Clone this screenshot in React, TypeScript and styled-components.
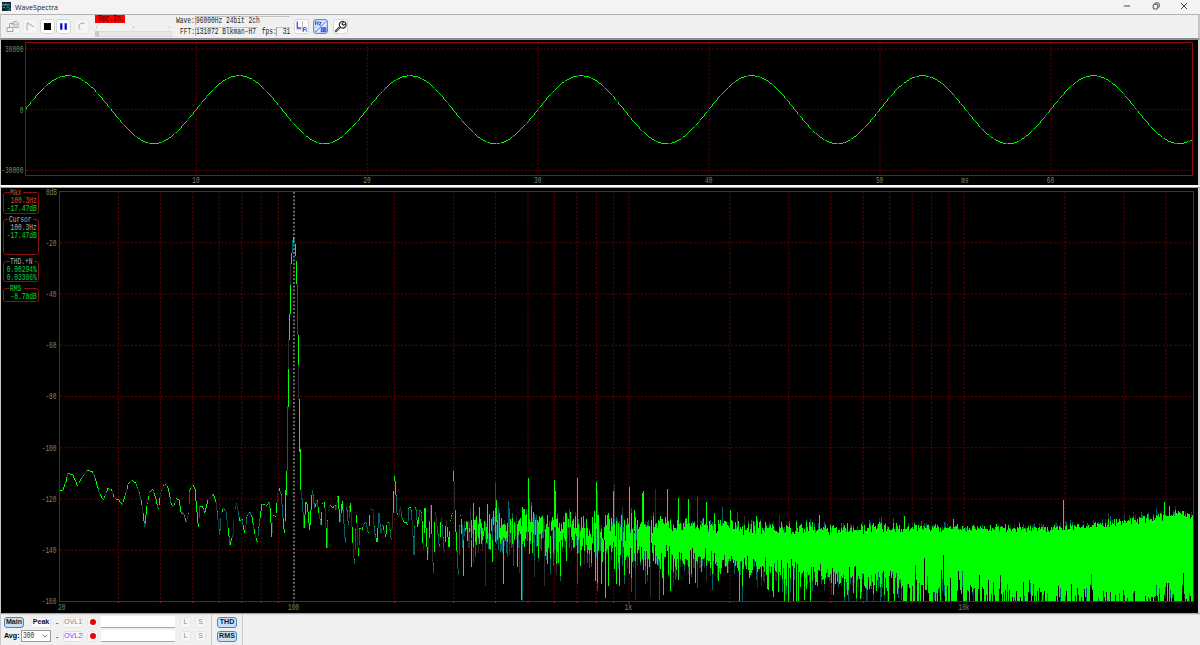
import React from 'react';
import styled, { createGlobalStyle, css } from 'styled-components';

const GlobalStyle = createGlobalStyle`
  html, body { margin: 0; padding: 0; background: #f0f0f0; overflow: hidden; }
  * { box-sizing: border-box; }
`;

const Window = styled.div`
  width: 1200px;
  height: 645px;
  display: flex;
  flex-direction: column;
  background: #f0f0f0;
  font-family: 'Liberation Sans', sans-serif;
  overflow: hidden;
`;

const TitleBar = styled.header`
  height: 14px;
  flex: none;
  display: flex;
  align-items: center;
  padding: 0 11px 1px 2px;
  background: #f3f3f3;
  color: #222;
`;

const Title = styled.span`
  font: 7.1px/13px 'Open Sans', 'Noto Sans', sans-serif;
  margin-left: 4px;
  padding-top: 1px;
  flex: 1;
`;

const WindowControls = styled.div`
  display: flex;
  gap: 18.5px;
  svg { display: block; margin-top: -1px; }
`;

const Toolbar = styled.div`
  height: 26px;
  flex: none;
  display: flex;
  align-items: flex-start;
  border: 1px solid #b4b4b4;
  border-left-color: #c8c8c8;
  border-right: 2px solid #c4c4c4;
  border-bottom: 2px solid #8c8c8c;
  background: #f0f0f0;
  padding-left: 4px;
`;

const ToolButton = styled.button<{ $gap?: number; $active?: boolean; $muted?: boolean }>`
  width: 15px;
  height: 15px;
  flex: none;
  display: flex;
  align-items: center;
  justify-content: center;
  margin: 4px 0 0 ${p => p.$gap ?? 0}px;
  padding: 0;
  border: 1px solid ${p => (p.$active ? '#5b93c4' : p.$muted ? '#eaeaea' : '#d6d6d6')};
  border-radius: 3px;
  background: ${p => (p.$active ? '#c3dcf3' : p.$muted ? '#f5f5f5' : '#fefefe')};
`;

const RecordStatus = styled.div`
  width: 77px;
  flex: none;
  margin-left: 6px;
`;

const RecordBadge = styled.div`
  width: 30px;
  height: 8px;
  padding-left: 3px;
  background: #ff0000;
  color: #300;
  line-height: 9px;
`;

const SliderTicks = styled.div`
  display: flex;
  justify-content: space-between;
  margin: 3px 2px 3px 1px;
  i { width: 1px; height: 2px; background: #c8c8c8; }
`;

const SliderTrack = styled.div`
  height: 6px;
  border: 1px solid #dcdcdc;
  background: #e7e7e7;
`;

const SliderThumb = styled.div`
  width: 4px;
  height: 6px;
  margin: -1px;
  background: #c9c9c9;
`;

const Mono = styled.span<{ $right?: boolean }>`
  display: block;
  flex: none;
  font-family: 'Liberation Mono', monospace;
  font-size: 8.5px;
  line-height: inherit;
  white-space: pre;
  transform: scaleX(0.735);
  transform-origin: ${p => (p.$right ? 'right' : 'left')} center;
`;

const FormatInfo = styled.div`
  width: 115px;
  flex: none;
  margin-left: 4px;
  color: #1c1c1c;
`;

const InfoRow = styled.div<{ $indent?: number }>`
  display: flex;
  height: 10px;
  margin-top: 1px;
  padding-left: ${p => p.$indent ?? 0}px;
  line-height: 9px;
`;

const InfoLabel = styled.div<{ $w: number }>`
  width: ${p => p.$w}px;
  flex: none;
  padding-top: 1px;
`;

const InfoField = styled.div<{ $w: number; $end?: boolean }>`
  width: ${p => p.$w}px;
  height: 9px;
  flex: none;
  display: flex;
  justify-content: ${p => (p.$end ? 'flex-end' : 'flex-start')};
  border-left: 1px solid #a8a8a8;
  border-top: 1px solid #c2c2c2;
  line-height: 9px;
`;

const GraphPane = styled.main<{ $h: number }>`
  height: ${p => p.$h}px;
  flex: none;
  display: flex;
  background: #000;
  border-left: 1px solid #c8c8c8;
  border-right: 2px solid #d6d6d6;
`;

const Splitter = styled.div`
  height: 3px;
  flex: none;
  background: #fafafa;
  border-bottom: 1px solid #a0a0a0;
`;

const Readouts = styled.aside`
  width: 40px;
  flex: none;
  padding: 4px 2px 0 2px;
  display: flex;
  flex-direction: column;
`;

const Group = styled.section<{ $h: number; $gap: number }>`
  height: ${p => p.$h}px;
  flex: none;
  margin-bottom: ${p => p.$gap}px;
  border: 1px solid #8a1212;
  border-radius: 3px;
`;

const Legend = styled.div<{ $color: string; $indent: number; $w: number }>`
  width: ${p => p.$w}px;
  height: 7px;
  margin: -3px 0 0 ${p => p.$indent}px;
  background: #000;
  color: ${p => p.$color};
  line-height: 7px;
`;

const Reading = styled.div<{ $color: string }>`
  display: flex;
  justify-content: flex-end;
  height: 7.7px;
  line-height: 8px;
  margin-right: 1px;
  color: ${p => p.$color};
`;

const BottomBar = styled.footer`
  flex: 1;
  display: flex;
  border-top: 1px solid #a8a8a8;
  background: #f0f0f0;
`;

const Panel = styled.div<{ $w: number }>`
  width: ${p => p.$w}px;
  flex: none;
  display: flex;
  flex-direction: column;
  gap: 2px;
  padding: 1px 0 0 3px;
  border-left: 1px solid #c8c8c8;
  border-top: 1px solid #dcdcdc;
`;

const PanelRow = styled.div`
  display: flex;
  align-items: center;
  height: 12px;
`;

type Tone = 'on' | 'plain' | 'gray' | 'rose' | 'blue';
const tones: Record<Tone, ReturnType<typeof css>> = {
  on: css`background: #c8e0f5; border-color: #4b86b8; color: #0c1c2c; font-weight: bold;`,
  plain: css`background: #fbfbfb; border-color: #e6e6e6; color: #111; font-weight: bold;`,
  gray: css`background: #f7f7f7; border-color: #e6e6e6; color: #8b8b8b;`,
  rose: css`background: #f7f7f7; border-color: #e6e6e6; color: #b07f7f;`,
  blue: css`background: #fbfbfb; border-color: #dedede; color: #5656f0;`,
};

const SmallButton = styled.button<{ $w: number; $tone: Tone; $gap?: number }>`
  width: ${p => p.$w}px;
  height: 11px;
  flex: none;
  display: flex;
  align-items: center;
  justify-content: center;
  margin-left: ${p => p.$gap ?? 0}px;
  padding: 0;
  border: 1px solid;
  border-radius: 3px;
  font: 7.1px/9px 'Liberation Sans', sans-serif;
  ${p => tones[p.$tone]}
`;

const Dash = styled.span`
  width: 12px;
  flex: none;
  text-align: center;
  font: 8px/9px 'Liberation Sans', sans-serif;
`;

const RedDot = styled.i`
  width: 6px;
  height: 6px;
  flex: none;
  border-radius: 50%;
  background: #f40000;
`;

const NameField = styled.div`
  width: 74px;
  height: 12px;
  flex: none;
  margin-left: 3px;
  background: #fff;
  border-bottom: 1px solid #a8a8a8;
`;

const AvgLabel = styled.span`
  width: 17px;
  flex: none;
  font: bold 7.1px/9px 'Liberation Sans', sans-serif;
`;

const Select = styled.div`
  width: 30px;
  height: 12px;
  flex: none;
  display: flex;
  align-items: center;
  justify-content: space-between;
  padding: 0 2px 0 1px;
  border: 1px solid #9a9a9a;
  background: #fff;
  line-height: 9px;
  color: #333;
`;

const SelectValue = styled.div`
  width: 12px;
  padding-top: 1px;
`;

const PANE_X = 1;
const WAVE_Y = 40;

function AxisText({ x, y, children, anchor = 'end' }: { x: number; y: number; children: string; anchor?: 'end' | 'start' | 'middle' }) {
  return (
    <text
      x={x}
      y={y}
      textAnchor={anchor}
      textLength={children.length * 3.7}
      lengthAdjust="spacingAndGlyphs"
      fontFamily="'Liberation Mono', monospace"
      fontSize="8.5"
      fill="#7d8460"
    >
      {children}
    </text>
  );
}

type Pt = [number, number];

/** Linear interpolation through a table of points sorted by x. */
function sample(table: Pt[], x: number): number {
  if (x <= table[0][0]) return table[0][1];
  for (let i = 1; i < table.length; i++) {
    if (x <= table[i][0]) {
      const [x0, y0] = table[i - 1];
      const [x1, y1] = table[i];
      return y0 + ((y1 - y0) * (x - x0)) / (x1 - x0);
    }
  }
  return table[table.length - 1][1];
}

function createRandom(seed: number) {
  let s = seed;
  return () => {
    s = (s + 0x6d2b79f5) | 0;
    let t = Math.imul(s ^ (s >>> 15), 1 | s);
    t = (t + Math.imul(t ^ (t >>> 7), 61 | t)) ^ t;
    return ((t ^ (t >>> 14)) >>> 0) / 4294967296;
  };
}

interface Strokes { g: string; t: string; d: string }
const add = (s: Strokes, k: keyof Strokes, x: number, a: number, b: number) => {
  s[k] += `M${x + 0.5} ${Math.round(a)}V${Math.max(Math.round(b), Math.round(a) + 1)}`;
};

function buildWave(): Strokes {
  const s: Strokes = { g: '', t: '', d: '' };
  const f = (x: number) => 109.3 - 34 * Math.sin(((x - 25.5) / 170.9) * 2 * Math.PI);
  for (let x = 26; x < 1192; x++) {
    const a = f(x);
    const b = f(x + 1);
    const k = x % 13 === 5 || x % 13 === 6 || x % 29 === 3 ? 't' : 'g';
    add(s, k, x, Math.min(a, b), Math.max(a, b));
  }
  return s;
}

const low: Pt[] = ([
  [28, 118], [38, 122], [48, 95], [54, 69], [68, 74], [82, 106], [95, 84], [112, 61], [126, 62], [136, 85],
  [148, 130], [160, 150], [174, 115], [184, 118], [194, 145], [206, 149], [216, 164], [228, 128], [236, 98],
  [246, 90], [256, 98], [268, 128], [276, 165], [284, 230], [292, 160], [300, 124], [308, 118], [316, 140],
  [325, 177], [334, 120], [341, 106], [348, 102], [356, 120], [364, 163], [372, 166], [380, 145], [387, 150],
  [394, 192], [400, 187], [409, 217], [415, 190], [420, 120], [428, 103], [435, 118], [445, 230], [450, 168],
  [457, 168], [464, 190], [474, 150], [490, 132], [498, 155], [509, 255], [514, 190], [520, 174], [528, 185],
  [540, 284], [549, 255], [554, 180], [560, 160], [569, 212], [576, 208], [584, 250], [592, 195], [599, 185],
  [606, 200], [614, 250], [622, 276], [630, 205], [636, 163], [645, 162], [650, 168], [657, 155], [661, 180],
  [665, 260], [671, 195], [677, 200], [685, 120],
] as Pt[]).map(([x, y]) => [50 + x / 3, 450 + y / 3] as Pt);

const mid: Pt[] = ([
  [27, 925], [34, 945], [37, 990], [43, 1060], [47, 935], [50, 870], [53, 680], [56, 480], [59, 400], [62, 270],
  [65, 200], [68, 180], [71, 172], [76, 190], [79, 240], [82, 310], [85, 465], [88, 640], [91, 810], [94, 930],
  [98, 980], [102, 1043], [108, 965], [112, 975], [119, 1050], [127, 930], [134, 985], [141, 960], [147, 1000],
  [153, 1035], [158, 970], [164, 965], [171, 1105], [175, 990], [181, 975], [188, 985], [195, 975], [198, 990],
  [204, 948], [210, 1025], [217, 962], [226, 1088], [230, 980], [235, 1035], [241, 968], [246, 1040], [253, 1153],
  [260, 1005], [265, 1128], [270, 1045], [276, 1050], [283, 1030], [288, 1025], [295, 1060], [302, 985],
  [309, 990], [313, 1055], [321, 1085], [327, 1000], [333, 1060], [338, 1035], [347, 1070], [352, 1025],
  [357, 1030], [364, 1080], [369, 1000], [374, 888], [378, 945], [381, 1000], [386, 1010], [391, 980],
  [396, 1015], [402, 1025], [407, 1025], [413, 1035], [417, 985], [422, 980], [427, 1030], [432, 1125],
  [437, 980], [443, 1040], [450, 990], [455, 1000], [460, 1110], [465, 985], [473, 1140], [483, 975],
  [490, 1178], [496, 995], [502, 1045], [508, 1100], [514, 1010], [523, 1120], [529, 1020], [537, 1100],
  [542, 1020], [547, 1000], [551, 873], [556, 1020], [565, 1185], [571, 1005],
] as Pt[]).map(([x, y]) => [270 + x / 3, 180 + y / 3] as Pt);

/** The steep skirts of the fundamental, one span per pixel column. */
const skirts: [number, number, number, keyof Strokes][] = [
  [285, 490, 521, 'g'], [286, 471, 495, 'g'], [287, 406, 471, 't'], [288, 369, 407, 'g'], [288, 339, 370, 'd'],
  [289, 314, 340, 'g'], [290, 285, 314, 'g'], [290, 263, 286, 'd'], [291, 253, 264, 'g'], [292, 240, 253, 't'],
  [293, 237, 243, 'g'], [294, 239, 247, 't'], [295, 244, 256, 'g'], [296, 261, 284, 'g'], [297, 283, 335, 't'],
  [298, 335, 365, 'g'], [298, 365, 400, 'd'], [299, 399, 452, 'g'], [300, 449, 490, 'g'], [301, 490, 500, 'd'],
];

const ceiling: Pt[] = [
  [460, 514], [500, 513], [560, 518], [620, 521], [700, 524], [800, 528], [900, 527], [1000, 528],
  [1060, 528], [1100, 524], [1130, 520], [1160, 516], [1185, 512], [1193, 518],
];
const floor: Pt[] = [
  [460, 546], [520, 549], [560, 552], [600, 556], [660, 561], [700, 566], [760, 573], [800, 578],
  [850, 583], [900, 586], [950, 589], [1000, 592], [1193, 594],
];

type Spike = [number, number, keyof Strokes];
const peaks: Spike[] = [
  [495, 483, 't'], [496, 500, 'g'], [508, 501, 't'], [528, 478, 'g'], [529, 498, 't'], [554, 480, 'g'], [555, 491, 'g'],
  [577, 478, 'g'], [596, 482, 'g'], [597, 491, 't'], [613, 491, 'g'], [614, 484, 'd'], [629, 487, 'g'], [634, 510, 'g'],
  [642, 493, 'g'], [643, 491, 'g'], [655, 489, 'd'], [667, 489, 'g'], [678, 498, 'g'], [688, 499, 'g'], [697, 497, 't'],
  [706, 502, 'g'], [714, 513, 'g'], [722, 507, 't'], [730, 510, 'g'], [737, 512, 't'], [744, 516, 'd'], [756, 516, 'g'],
  [779, 515, 'd'], [819, 515, 'g'], [904, 516, 'g'], [953, 519, 'g'], [1063, 500, 'g'], [1164, 502, 'g'], [1169, 506, 'g'],
];
const dips: Spike[] = [
  [463, 576, 'g'], [471, 567, 'g'], [485, 586, 'd'], [492, 562, 'g'], [503, 584, 'g'], [513, 566, 't'], [519, 573, 'd'],
  [521, 600, 'g'], [522, 601, 't'], [544, 586, 'd'], [577, 584, 't'], [595, 581, 'g'], [597, 591, 't'], [601, 584, 'g'],
  [605, 598, 'g'], [608, 586, 'g'], [616, 584, 'g'], [619, 586, 'g'], [635, 600, 'd'], [645, 584, 't'], [650, 597, 'd'],
  [659, 600, 't'], [663, 580, 'g'], [670, 591, 'g'], [689, 584, 'g'], [697, 588, 't'], [712, 589, 'd'], [739, 601, 'g'],
  [742, 601, 't'], [768, 590, 'g'], [788, 601, 'g'], [796, 601, 'g'], [804, 600, 'g'], [810, 601, 'g'],
];

function buildSpectrum(): Strokes {
  const s: Strokes = { g: '', t: '', d: '' };
  const rnd = createRandom(4171);
  const table = low.concat(mid);
  for (let x = 59; x < 461; x++) {
    if (x >= 285 && x <= 301) continue;
    let a = sample(table, x);
    let b = sample(table, x + 1);
    for (const [px, py] of table) {
      if (px > x && px < x + 1) { a = Math.min(a, py); b = Math.max(b, py); }
    }
    const top = Math.min(a, b);
    const bottom = Math.max(a, b);
    const r = rnd();
    add(s, r < 0.45 ? 'g' : r < 0.82 ? 't' : 'd', x, top, bottom);
    if (r >= 0.45 && r < 0.7) add(s, 'g', x, top, top + 1);
  }
  skirts.forEach(([x, a, b, k]) => add(s, k, x, a, b));
  for (let x = 461; x < 1193; x++) {
    const T = sample(ceiling, x);
    const B = sample(floor, x);
    const sparse = Math.max(0, Math.min(1, (690 - x) / 200));
    const rough = Math.max(0, Math.min(1, (960 - x) / 260));
    let top = T + (rnd() + rnd() - 0.9) * (5 + rough * 5 + sparse * 7);
    let bottom: number;
    if (x > 900) {
      const share = Math.min(0.6, 0.3 + (x - 900) / 260);
      bottom = rnd() < share ? 601 : B + 5 + Math.log(rnd() + 0.02) * (x > 970 ? 8 : 11);
    } else {
      bottom = B - 12 + (rnd() - 0.5) * 16 - Math.log(rnd() + 0.02) * (7 + (1 - sparse) * 4);
    }
    if (rnd() < sparse * 0.6) {
      const c = top + (bottom - top) * (0.15 + rnd() * 0.7);
      const half = 4 + rnd() * 11;
      top = Math.max(top, c - half);
      bottom = Math.min(bottom, c + half);
    }
    bottom = Math.min(601, Math.max(bottom, top + 3));
    const r = rnd();
    const key: keyof Strokes = r < 0.2 * sparse ? 't' : r < 0.3 * sparse ? 'd' : 'g';
    if (rnd() < 0.35) add(s, rnd() < 0.55 ? 't' : 'd', x, top - rnd() * 6, top);
    if (rnd() < 0.4 && bottom < 600) {
      add(s, rnd() < 0.5 ? 't' : 'd', x, bottom, Math.min(601, bottom + 2 + rnd() * 14));
    }
    add(s, key, x, top, bottom);
  }
  peaks.forEach(([x, y, k]) => add(s, k, x, y, sample(ceiling, x) + 9));
  dips.forEach(([x, y, k]) => add(s, k, x, 540, y));
  return s;
}

const wave = buildWave();
const spectrum = buildSpectrum();

function Trace({ data }: { data: Strokes }) {
  return (
    <g shapeRendering="crispEdges" fill="none" strokeWidth="1">
      <path d={data.d} stroke="#2c2c2c" />
      <path d={data.t} stroke="#006464" />
      <path d={data.g} stroke="#00ff00" />
    </g>
  );
}

const GRID = '#6a0000';
const DASH = '2 1.75';

function WaveGraph() {
  return (
    <svg width="1197" height="145" viewBox={`${PANE_X} ${WAVE_Y} 1197 145`}>
      <g stroke={GRID} strokeDasharray={DASH}>
        {[49, 109.3, 170.3].map(y => <line key={y} x1="26" x2="1193" y1={y} y2={y} />)}
        {[1, 2, 3, 4, 5, 6].map(i => {
          const x = 25.5 + i * 170.9;
          return <line key={i} x1={x} x2={x} y1="43" y2="175" />;
        })}
      </g>
      <rect x="25.5" y="42.5" width="1167" height="133" fill="none" stroke="#8c1010" />
      <Trace data={wave} />
      <AxisText x={23.5} y={52}>30000</AxisText>
      <AxisText x={23.5} y={112.5}>0</AxisText>
      <AxisText x={23.5} y={173}>-30000</AxisText>
      {['10', '20', '30', '40', '50', '60'].map((t, i) => (
        <AxisText key={t} x={196 + i * 170.9} y={183} anchor="middle">{t}</AxisText>
      ))}
      <AxisText x={965} y={183} anchor="middle">ms</AxisText>
    </svg>
  );
}

const freqX = (f: number) => 59.4 + 335.2 * Math.log10(f / 20);
const gridFreqs: number[] = [];
for (const decade of [10, 100, 1000, 10000]) {
  for (let n = 1; n < 10; n++) {
    const f = decade * n;
    if (f > 20 && f < 48000) gridFreqs.push(f);
  }
}

function SpectrumGraph() {
  return (
    <svg width="1157" height="425" viewBox="41 188 1157 425">
      <g stroke={GRID} strokeDasharray={DASH}>
        {[1, 2, 3, 4, 5, 6, 7].map(i => {
          const y = 191.5 + i * 51.25;
          return <line key={i} x1="60" x2="1193" y1={y} y2={y} />;
        })}
        {gridFreqs.map(f => <line key={f} x1={freqX(f)} x2={freqX(f)} y1="192" y2="601" />)}
      </g>
      <line x1="294" x2="294" y1="192" y2="601" stroke="#888" strokeWidth="1.6" strokeDasharray="1.8 1.95" />
      <Trace data={spectrum} />
      <rect x="59.5" y="191.5" width="1134" height="410" fill="none" stroke="#8c1418" />
      <g stroke="#b02020">
        {gridFreqs.map(f => <line key={f} x1={freqX(f)} x2={freqX(f)} y1="601" y2="603" />)}
      </g>
      <AxisText x={57} y={195}>0dB</AxisText>
      {[20, 40, 60, 80, 100, 120, 140, 160].map((v, i) => (
        <AxisText key={v} x={56.5} y={245.6 + i * 51.25}>{`-${v}`}</AxisText>
      ))}
      <AxisText x={58} y={610} anchor="start">20</AxisText>
      <AxisText x={293.5} y={610} anchor="middle">100</AxisText>
      <AxisText x={628.5} y={610} anchor="middle">1k</AxisText>
      <AxisText x={964} y={610} anchor="middle">10k</AxisText>
    </svg>
  );
}

function Readout({ title, color, indent, width, height, gap, rows }: {
  title: string; color: string; indent: number; width: number; height: number; gap: number; rows: [string, string][];
}) {
  return (
    <Group $h={height} $gap={gap}>
      <Legend $color={color} $indent={indent} $w={width}><Mono>{title}</Mono></Legend>
      {rows.map(([text, c]) => (
        <Reading key={text} $color={c}><Mono $right>{text}</Mono></Reading>
      ))}
    </Group>
  );
}

function OverlayControls({ name, tone }: { name: string; tone: Tone }) {
  return (
    <>
      <SmallButton $w={20} $tone={tone}>{name}</SmallButton>
      <SmallButton $w={11} $tone="plain" $gap={4}><RedDot /></SmallButton>
      <NameField />
      <SmallButton $w={11} $tone="rose" $gap={5}>L</SmallButton>
      <SmallButton $w={11} $tone="gray" $gap={4}>S</SmallButton>
    </>
  );
}

export default function App() {
  return (
    <Window>
      <GlobalStyle />
      <TitleBar>
        <svg width="9" height="9" viewBox="0 0 9 9">
          <rect width="9" height="9" fill="#10242e" />
          <path d="M.5 3.5l1-1.6 1.2 1.8 1.3-2 1.2 1.6 1.4-1.2 1.6 1.6" fill="none" stroke="#58c4e4" strokeWidth=".9" />
          <path d="M1 5.5h2M4 6.5l2-2 2.5 2.5M5.5 8h3" fill="none" stroke="#3f9dbd" strokeWidth=".9" />
        </svg>
        <Title>WaveSpectra</Title>
        <WindowControls>
          <svg width="10" height="10" viewBox="0 0 10 10"><path d="M1.8 5h6.2" stroke="#333" strokeWidth=".9" /></svg>
          <svg width="10" height="10" viewBox="0 0 10 10" fill="none" stroke="#333" strokeWidth=".9">
            <rect x="2.2" y="3.4" width="4.6" height="4.6" rx="1" />
            <path d="M3.6 2.9c.2-.8.6-1 1.2-1h1.9c1 0 1.6.6 1.6 1.6v1.7c0 .7-.3 1.1-1 1.3" />
          </svg>
          <svg width="10" height="10" viewBox="0 0 10 10"><path d="M2 2l6 6M8 2l-6 6" stroke="#333" strokeWidth=".9" /></svg>
        </WindowControls>
      </TitleBar>

      <Toolbar>
        <ToolButton $muted>
          <svg width="13" height="13" viewBox="0 0 13 13" fill="none" stroke="#a2a2a2">
            <path d="M1 7.5h6v4H1zM3.5 7V3.5h3M5.5 1.8l1.8 1.7-1.8 1.7M8 1.5h2.6l1.4 1.4v4.6H8zM10 3.5v2.5" />
          </svg>
        </ToolButton>
        <ToolButton $muted $gap={3}>
          <svg width="13" height="13" viewBox="0 0 13 13" fill="none" stroke="#a8a8a8"><path d="M3 10.5V2.8l7 4" /></svg>
        </ToolButton>
        <ToolButton $gap={2}>
          <svg width="13" height="13" viewBox="0 0 13 13"><rect x="3" y="3" width="7" height="7" /></svg>
        </ToolButton>
        <ToolButton $gap={1}>
          <svg width="13" height="13" viewBox="0 0 13 13" fill="#0000f0"><path d="M3.2 3.2h2.2v6.6H3.2zM7.6 3.2h2.2v6.6H7.6z" /></svg>
        </ToolButton>
        <ToolButton $muted $gap={3}>
          <svg width="13" height="13" viewBox="0 0 13 13" fill="none" stroke="#b4b4b4" strokeWidth="1.1"><path d="M9.5 3.6C6.5 2.2 3.6 4 3.9 7c.1 1.2.6 2 1.4 2.6" /></svg>
        </ToolButton>
        <RecordStatus>
          <RecordBadge><Mono>Rec.In.</Mono></RecordBadge>
          <SliderTicks><i /><i /><i /></SliderTicks>
          <SliderTrack><SliderThumb /></SliderTrack>
        </RecordStatus>
        <FormatInfo>
          <InfoRow>
            <InfoLabel $w={19}><Mono>Wave:</Mono></InfoLabel>
            <InfoField $w={95}><Mono>96000Hz 24bit 2ch</Mono></InfoField>
          </InfoRow>
          <InfoRow $indent={4}>
            <InfoLabel $w={15}><Mono>FFT:</Mono></InfoLabel>
            <InfoField $w={63}><Mono>131072 Blkman-H7</Mono></InfoField>
            <InfoLabel $w={18}><Mono>{' fps:'}</Mono></InfoLabel>
            <InfoField $w={14} $end><Mono $right>31</Mono></InfoField>
          </InfoRow>
        </FormatInfo>
        <ToolButton $gap={3}>
          <svg width="13" height="13" viewBox="0 0 13 13" fill="none">
            <path d="M2.3 1.5v6.5h4" stroke="#4848f0" strokeWidth="1.3" />
            <path d="M7.5 1v11M1.5 9.8h5" stroke="#999" strokeWidth=".6" />
            <path d="M8.6 11.8V7.5h1.8c1.4 0 1.4 2 0 2H8.6m2 0l1.4 2.3" stroke="#4848f0" strokeWidth="1" />
          </svg>
        </ToolButton>
        <ToolButton $active $gap={4}>
          <svg width="13" height="13" viewBox="0 0 13 13" fill="none" stroke="#3c50e0" strokeWidth=".9">
            <path d="M2.2 10.3L11.3 1.2M3.8 11.8L12.3 3.3" stroke="#fff" strokeWidth="1.1" />
            <path d="M1.5 1v4M4 1v4M1.5 3h2.5M5.2 2.5h2L5.2 5h2M1.5 12l10.5-10.5" />
            <rect x="7.2" y="7.8" width="2.3" height="3.9" fill="#7c8cf0" />
            <rect x="10" y="7.8" width="2" height="3.9" fill="#7c8cf0" />
          </svg>
        </ToolButton>
        <ToolButton $gap={5}>
          <svg width="13" height="13" viewBox="0 0 13 13" fill="none" stroke="#333" strokeWidth="1">
            <path d="M1.3 11.8L5.8 7.2" strokeWidth="2.2" />
            <path d="M1.8 11.3L6 7" stroke="#bbb" strokeWidth=".8" />
            <path d="M9.8 1.5a3.4 3.4 0 1 0 2.2 4M9.8 1.5c1.2.3 2 1.1 2.2 2.3v1.7M9.8 1.5L8 4l1.3 1.2L12 3.8" strokeWidth="1.2" />
          </svg>
        </ToolButton>
      </Toolbar>

      <GraphPane $h={145}><WaveGraph /></GraphPane>
      <Splitter />
      <GraphPane $h={425}>
        <Readouts>
          <Readout title="Max" color="#d9532c" indent={6} width={13} height={22} gap={5}
            rows={[['100.3Hz', '#d9532c'], ['-17.47dB', '#00e020']]} />
          <Readout title="Cursor" color="#b4b4b4" indent={5} width={24} height={36} gap={6}
            rows={[['100.3Hz', '#b4b4b4'], ['-17.47dB', '#00e020']]} />
          <Readout title="THD.+N" color="#b4b4b4" indent={6} width={24} height={21} gap={6}
            rows={[['0.00294%', '#00d84a'], ['0.03386%', '#00d84a']]} />
          <Readout title="RMS" color="#00e020" indent={6} width={14} height={14} gap={0}
            rows={[['-8.78dB', '#00e020']]} />
        </Readouts>
        <SpectrumGraph />
      </GraphPane>

      <BottomBar>
        <Panel $w={211}>
          <PanelRow>
            <SmallButton $w={20} $tone="on">Main</SmallButton>
            <SmallButton $w={20} $tone="plain" $gap={7}>Peak</SmallButton>
            <Dash>-</Dash>
            <OverlayControls name="OVL1" tone="gray" />
          </PanelRow>
          <PanelRow>
            <AvgLabel>Avg:</AvgLabel>
            <Select>
              <SelectValue><Mono>300</Mono></SelectValue>
              <svg width="6" height="4" viewBox="0 0 6 4"><path d="M.7.7L3 3 5.3.7" fill="none" stroke="#555" strokeWidth=".8" /></svg>
            </Select>
            <Dash>-</Dash>
            <OverlayControls name="OVL2" tone="blue" />
          </PanelRow>
        </Panel>
        <Panel $w={31}>
          <PanelRow><SmallButton $w={20} $tone="on" $gap={2}>THD</SmallButton></PanelRow>
          <PanelRow><SmallButton $w={20} $tone="on" $gap={2}>RMS</SmallButton></PanelRow>
        </Panel>
        <Panel $w={958} />
      </BottomBar>
    </Window>
  );
}
